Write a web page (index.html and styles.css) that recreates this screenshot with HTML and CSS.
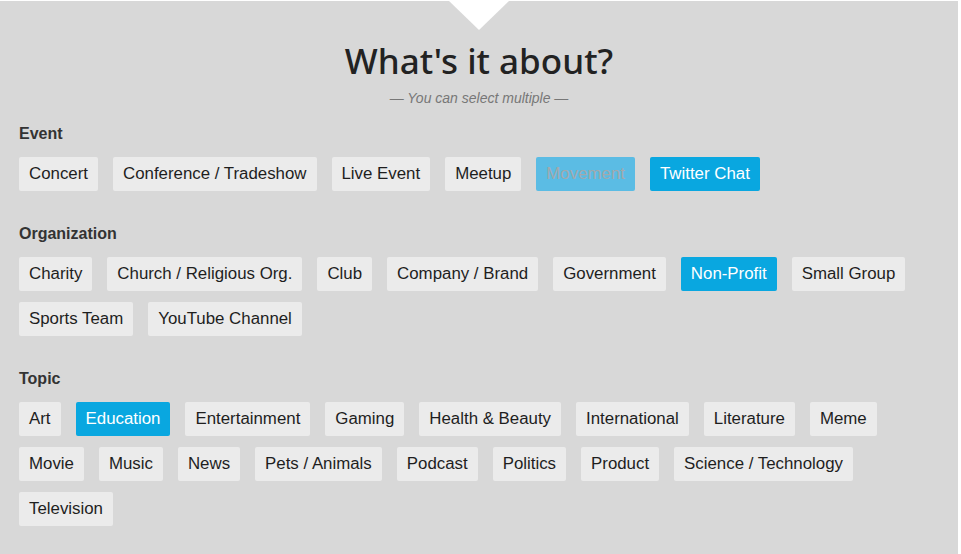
FILE: index.html
```html
<!DOCTYPE html>
<html>
<head>
<meta charset="utf-8">
<link rel="stylesheet" href="styles.css">
</head>
<body>
<div class="panel">
  <h1 class="title">What's it about?</h1>
  <p class="subtitle">— You can select multiple —</p>

  <section class="group">
    <h2 class="group-label">Event</h2>
    <div class="chips">
      <span class="chip">Concert</span>
      <span class="chip">Conference / Tradeshow</span>
      <span class="chip">Live Event</span>
      <span class="chip">Meetup</span>
      <span class="chip chip-hover">Movement</span>
      <span class="chip chip-on">Twitter Chat</span>
    </div>
  </section>

  <section class="group">
    <h2 class="group-label">Organization</h2>
    <div class="chips">
      <span class="chip">Charity</span>
      <span class="chip">Church / Religious Org.</span>
      <span class="chip">Club</span>
      <span class="chip">Company / Brand</span>
      <span class="chip">Government</span>
      <span class="chip chip-on">Non-Profit</span>
      <span class="chip">Small Group</span>
      <span class="chip">Sports Team</span>
      <span class="chip">YouTube Channel</span>
    </div>
  </section>

  <section class="group">
    <h2 class="group-label">Topic</h2>
    <div class="chips">
      <span class="chip">Art</span>
      <span class="chip chip-on">Education</span>
      <span class="chip">Entertainment</span>
      <span class="chip">Gaming</span>
      <span class="chip">Health &amp; Beauty</span>
      <span class="chip">International</span>
      <span class="chip">Literature</span>
      <span class="chip">Meme</span>
      <span class="chip">Movie</span>
      <span class="chip">Music</span>
      <span class="chip">News</span>
      <span class="chip">Pets / Animals</span>
      <span class="chip">Podcast</span>
      <span class="chip">Politics</span>
      <span class="chip">Product</span>
      <span class="chip">Science / Technology</span>
      <span class="chip">Television</span>
    </div>
  </section>
</div>
</body>
</html>
```

FILE: styles.css
```css
html, body {
  margin: 0;
  padding: 0;
  background: #ffffff;
}
body {
  padding-top: 1px;
  font-family: "Liberation Sans", Arial, sans-serif;
  color: #222222;
}
.panel {
  position: relative;
  width: 958px;
  height: 553px;
  background: #d8d8d8;
  padding: 0 0 0 19px;
  box-sizing: border-box;
  overflow: hidden;
}
.panel::before {
  content: "";
  position: absolute;
  top: 0;
  left: 449px;
  width: 0;
  height: 0;
  border-left: 30px solid transparent;
  border-right: 30px solid transparent;
  border-top: 29px solid #ffffff;
}
.title {
  margin: 0;
  padding-top: 38px;
  padding-right: 19px;
  text-align: center;
  font-family: "Noto Sans", sans-serif;
  font-weight: 500;
  font-size: 35px;
  line-height: 44px;
  color: #222222;
  letter-spacing: 0;
}
.subtitle {
  margin: 6px 0 0 0;
  padding-right: 19px;
  text-align: center;
  font-style: italic;
  font-size: 14px;
  line-height: 18px;
  color: #777777;
}
.group {
  margin-top: 17px;
}
.group + .group {
  margin-top: 33px;
}
.group-label {
  margin: 0;
  font-size: 16px;
  line-height: 20px;
  font-weight: bold;
  color: #333333;
}
.chips {
  margin-top: 13px;
  display: flex;
  flex-wrap: wrap;
  column-gap: 15px;
  row-gap: 11px;
  padding-right: 40px;
}
.chip {
  display: block;
  height: 34px;
  line-height: 34px;
  padding: 0 10px;
  font-size: 16.85px;
  background: #ebebeb;
  border-radius: 2px;
  color: #1e1e1e;
  white-space: nowrap;
}
.chip-on {
  background: #09a7e0;
  color: #ffffff;
}
.chip-hover {
  background: #5bbce4;
  color: #a2a9ad;
}
```
